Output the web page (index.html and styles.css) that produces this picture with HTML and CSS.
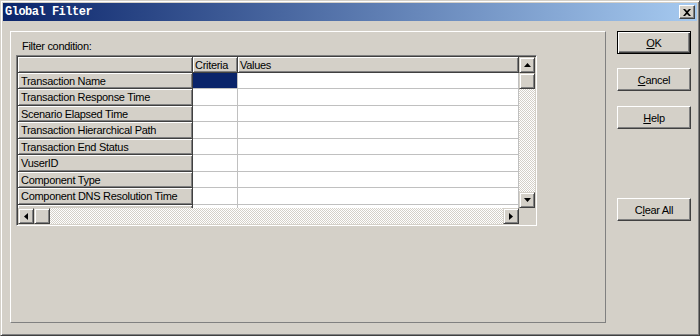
FILE: index.html
```html
<!DOCTYPE html>
<html lang="en">
<head>
    <meta charset="UTF-8">
    <title>Global Filter</title>
    <link rel="stylesheet" href="styles.css">
</head>
<body>
    <div class="window">
        <div class="titlebar">
            <span class="title">Global Filter</span>
            <button class="close">
                <svg width="8" height="7" viewBox="0 0 8 7"><path d="M0 0h2l2 2 2-2h2L5 3.5 8 7H6L4 5 2 7H0l3-3.5z" fill="#000"/></svg>
            </button>
        </div>

        <div class="body">
            <div class="panel">
                <div class="label">Filter condition:</div>
                <div class="grid">
                    <div class="grid-main">
                        <div class="table">
                            <div class="row head">
                                <div class="cell rh"></div>
                                <div class="cell ch">Criteria</div>
                                <div class="cell ch">Values</div>
                            </div>
                            <div class="row">
                                <div class="cell rh">Transaction Name</div>
                                <div class="cell selected"></div>
                                <div class="cell"></div>
                            </div>
                            <div class="row">
                                <div class="cell rh">Transaction Response Time</div>
                                <div class="cell"></div>
                                <div class="cell"></div>
                            </div>
                            <div class="row">
                                <div class="cell rh">Scenario Elapsed Time</div>
                                <div class="cell"></div>
                                <div class="cell"></div>
                            </div>
                            <div class="row">
                                <div class="cell rh">Transaction Hierarchical Path</div>
                                <div class="cell"></div>
                                <div class="cell"></div>
                            </div>
                            <div class="row">
                                <div class="cell rh">Transaction End Status</div>
                                <div class="cell"></div>
                                <div class="cell"></div>
                            </div>
                            <div class="row">
                                <div class="cell rh">VuserID</div>
                                <div class="cell"></div>
                                <div class="cell"></div>
                            </div>
                            <div class="row">
                                <div class="cell rh">Component Type</div>
                                <div class="cell"></div>
                                <div class="cell"></div>
                            </div>
                            <div class="row">
                                <div class="cell rh">Component DNS Resolution Time</div>
                                <div class="cell"></div>
                                <div class="cell"></div>
                            </div>
                            <div class="row">
                                <div class="cell rh"></div>
                                <div class="cell"></div>
                                <div class="cell"></div>
                            </div>
                        </div>
                        <div class="vscroll">
                            <div class="sb-btn">
                                <svg width="7" height="4" viewBox="0 0 7 4"><path d="M3.5 0L7 4H0z" fill="#000"/></svg>
                            </div>
                            <div class="sb-btn"></div>
                            <div class="sb-track"></div>
                            <div class="sb-btn">
                                <svg width="7" height="4" viewBox="0 0 7 4"><path d="M0 0h7L3.5 4z" fill="#000"/></svg>
                            </div>
                        </div>
                    </div>
                    <div class="grid-foot">
                        <div class="hscroll">
                            <div class="sb-btn">
                                <svg width="4" height="7" viewBox="0 0 4 7"><path d="M4 0v7L0 3.5z" fill="#000"/></svg>
                            </div>
                            <div class="sb-btn"></div>
                            <div class="sb-track"></div>
                            <div class="sb-btn">
                                <svg width="4" height="7" viewBox="0 0 4 7"><path d="M0 0l4 3.5L0 7z" fill="#000"/></svg>
                            </div>
                        </div>
                        <div class="corner"></div>
                    </div>
                </div>
            </div>

            <div class="buttons">
                <button class="button default"><u>O</u>K</button>
                <button class="button cancel"><u>C</u>ancel</button>
                <button class="button help"><u>H</u>elp</button>
                <button class="button clear">C<u>l</u>ear All</button>
            </div>
        </div>
    </div>
</body>
</html>
```

FILE: styles.css
```css
* {
    margin: 0;
    padding: 0;
    box-sizing: border-box;
}

body {
    background: #d4d0c8;
    font-family: "Liberation Sans", Arial, sans-serif;
    font-size: 11px;
    letter-spacing: -0.3px;
    color: #000;
}

.window {
    width: 700px;
    height: 336px;
    background: #d4d0c8;
    border: 1px solid;
    border-color: #d4d0c8 #404040 #404040 #d4d0c8;
    box-shadow: inset 1px 1px #fff, inset -1px -1px #808080;
    padding: 2px;
    display: flex;
    flex-direction: column;
}

.titlebar {
    height: 18px;
    background: linear-gradient(to right, #0a246a, #a6caf0);
    display: flex;
    align-items: center;
    justify-content: space-between;
    padding: 0 2px 0 2px;
}

.title {
    font-family: "Liberation Mono", monospace;
    font-weight: bold;
    font-size: 12px;
    letter-spacing: -0.5px;
    color: #fff;
}

.close {
    width: 16px;
    height: 14px;
    background: #d4d0c8;
    border: 1px solid;
    border-color: #fff #404040 #404040 #fff;
    box-shadow: inset -1px -1px #808080;
    display: flex;
    align-items: center;
    justify-content: center;
}

.body {
    flex: 1;
    display: flex;
    padding: 10px 0 0 7px;
}

.panel {
    width: 596px;
    height: 292px;
    border: 1px solid;
    border-color: #fff #808080 #808080 #fff;
    padding: 8px 0 0 5px;
}

.label {
    height: 13px;
    line-height: 13px;
    margin: 0 0 2px 6px;
}

.grid {
    width: 521px;
    height: 171px;
    border: 1px solid;
    border-color: #808080 #fff #fff #808080;
    box-shadow: inset 1px 1px #404040, inset -1px -1px #d4d0c8;
    padding: 1px;
    display: flex;
    flex-direction: column;
}

.grid-main {
    display: flex;
    height: 151px;
}

.table {
    width: 501px;
    overflow: hidden;
    background: #fff;
}

.row {
    display: grid;
    grid-template-columns: 175px 45px 281px;
    height: 16px;
}

.row:nth-child(odd):not(.head) {
    height: 17px;
}

.cell {
    border-right: 1px solid #c0c0c0;
    border-bottom: 1px solid #c0c0c0;
    padding: 1px 0 0 3px;
    line-height: 14px;
    white-space: nowrap;
    overflow: hidden;
}

.cell.rh,
.cell.ch {
    background: #d4d0c8;
    border-color: #404040;
    box-shadow: inset 1px 1px #fff, inset -1px -1px #808080;
}

.cell.ch {
    padding-left: 2px;
}

.cell.selected {
    background: #0a246a;
}

.vscroll {
    width: 16px;
    display: flex;
    flex-direction: column;
}

.hscroll {
    width: 501px;
    display: flex;
}

.sb-btn {
    width: 16px;
    height: 16px;
    flex: none;
    background: #d4d0c8;
    border: 1px solid;
    border-color: #d4d0c8 #404040 #404040 #d4d0c8;
    box-shadow: inset 1px 1px #fff, inset -1px -1px #808080;
    display: flex;
    align-items: center;
    justify-content: center;
}

.sb-track {
    flex: 1;
    background: repeating-conic-gradient(#fff 0 25%, #d4d0c8 0 50%) 0 0 / 2px 2px;
}

.grid-foot {
    display: flex;
    height: 16px;
}

.corner {
    width: 16px;
    background: #d4d0c8;
}

.buttons {
    display: flex;
    flex-direction: column;
    padding-left: 11px;
}

.button {
    width: 74px;
    height: 23px;
    background: #d4d0c8;
    font-family: "Liberation Sans", Arial, sans-serif;
    font-size: 11px;
    letter-spacing: -0.3px;
    color: #000;
    border: 1px solid;
    border-color: #fff #404040 #404040 #fff;
    box-shadow: inset -1px -1px #808080;
}

.button.default {
    border-color: #000;
    box-shadow: inset 1px 1px #fff, inset -1px -1px #404040, inset -2px -2px #808080;
}

.button.cancel {
    margin-top: 14px;
}

.button.help {
    margin-top: 15px;
}

.button.clear {
    margin-top: 69px;
}
```
